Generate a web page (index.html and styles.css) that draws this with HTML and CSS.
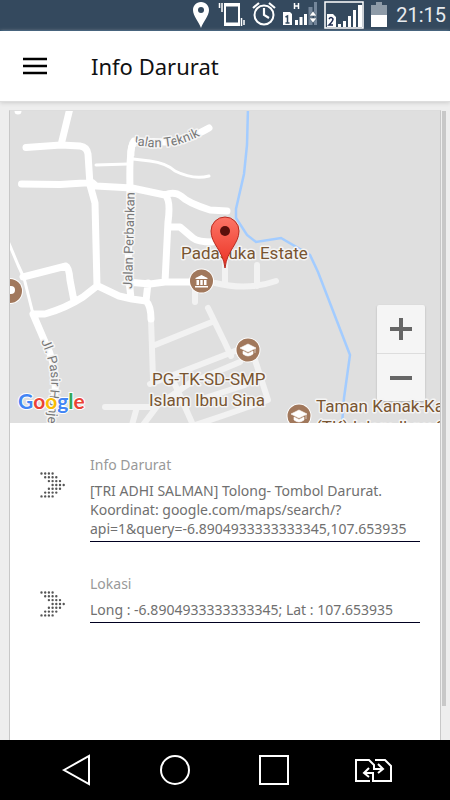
FILE: index.html
```html
<!DOCTYPE html>
<html lang="id">
<head>
<meta charset="utf-8">
<meta name="viewport" content="width=device-width, initial-scale=1">
<title>Info Darurat</title>
<link rel="stylesheet" href="styles.css">
</head>
<body>
<div class="status">
  <svg width="16" height="26" viewBox="194 4 16 26"><path d="M202 4c-5 0-8 4-8 8 0 6 6 12 8 18 2-6 8-12 8-18 0-4-3-8-8-8z" fill="#fff"/><circle cx="202" cy="12" r="3" fill="#34495e"/></svg>
  <svg width="29" height="26" viewBox="218 4 29 26" fill="none" stroke="#fff"><path d="M227 6h14v21h-14z" stroke-width="2"/><path d="M227 7.500h13M227 25.500h13" stroke-width="2"/><path d="M224 5v9M221.500 5v5M243.500 20v8M246 22v5" stroke-width="1.500"/></svg>
  <svg width="24" height="26" viewBox="253 4 24 26" fill="none" stroke="#fff" stroke-width="2"><circle cx="265" cy="17" r="9.500"/><path d="M265 10v7l5 3M254 10l6-5M276 10l-6-5" stroke-width="2.200"/></svg>
  <svg width="34" height="26" viewBox="286 4 34 26"><path d="M286 14h7l2 2v11h-9zM298 22h3v5h-3zM302.500 19h3v8h-3zM307 16h3v11h-3z" fill="#fff"/><path d="M311.500 9h4v18h-4zM317 4h3v23h-3z" fill="#74869a"/><path d="M297.500 5v6M301.500 5v6M297.500 8h4" stroke="#fff" stroke-width="1.500"/><path d="M312 18l4-5 4 5zM312 20h8l-4 5z" fill="#fff" stroke="#34495e" stroke-width=".6"/><path d="M288.500 19l2-1v7m-2 0h4" fill="none" stroke="#34495e" stroke-width="1.500"/></svg>
  <svg width="40" height="28" viewBox="324 1 40 28"><path d="M325 2h38v26h-38z" fill="#34495e" stroke="#fff" stroke-width="1.500"/><path d="M327 14h6l3 3v10h-9zM338 24h3v3h-3zM343 21h3v6h-3zM348 16h3v11h-3zM353 10h3v17h-3zM358 5h4v22h-4z" fill="#fff"/><path d="M329 19q2-3 4 0-0 2-4 6h4" fill="none" stroke="#1f2c52" stroke-width="1.500"/></svg>
  <svg width="16" height="26" viewBox="371 3 16 26"><path d="M376 3h6v3h5v11h-16V6h5z" fill="#8e9ba8"/><path d="M371 16h16v12h-16z" fill="#fff"/></svg>
  <span class="time">21:15</span>
</div>
<header class="bar">
  <button class="menu" aria-label="Menu"><svg width="24" height="18" viewBox="0 0 24 18"><path d="M0 2h24M0 9h24M0 16h24" stroke="#000" stroke-width="2.500"/></svg></button>
  <h1>Info Darurat</h1>
</header>
<main class="content">
  <section class="card">
    <div class="map">
      <svg class="tiles" viewBox="10 111 430 312" preserveAspectRatio="xMidYMid slice" role="img" aria-label="Peta Padasuka Estate">
        <defs>
          <linearGradient id="red" x1="0" y1="0" x2="0" y2="1"><stop offset="0" stop-color="#fd7567"/><stop offset="1" stop-color="#ea3122"/></linearGradient>
          <path id="teknik" d="M130 145Q138 146 144 146Q175 152 210 130"/>
          <path id="perbankan" d="M132 289L135 185"/>
          <path id="pasir" d="M41 341Q52 366 51 384L46 440"/>
          <g id="school"><circle r="12.500" fill="#fff"/><circle r="11.500" fill="#a1785c"/><path d="M-8-2L0-6 8-2 0 2zM-5 1v3Q0 8 5 4V1L0 3.500zM7-2v5" fill="#fff" stroke="#fff" stroke-width=".6"/></g>
        </defs>
        <path d="M0 100h460v340H0z" fill="#dfdfdf"/>
        <g class="lane">
          <path d="M151 319L152 349 153 380M155 345L212 322M208 308L225 343 231 356M150 384L225 355 240 349M173 380L193 425M105 407H150M137 407L132 425M143 425L158 405 190 383 240 362M255 360L268 400 225 415 195 425M215 283Q248 291 276 281M257 265V286M225 255V285M195 287V302M205 398L245 385"/>
        </g>
        <g class="road">
          <path d="M26 147.500L61 145 80 146Q87 147 88 154L90 185 95 203 97 286 83 297Q66 308 45 314H33M71 104L61 145M21.500 184L60 184.500 92 182.500 96 186 132 188 165 195Q174 191 181 196 188 203 210 210L227 211M98 286L119 296 132 299 146 301Q151 306 151 319M209 128Q185 142 165 142L134 141Q129 147 130 188L128 272 131 298M165 195Q171 200 168 222L165 282M168 227H180L193 238Q198 242 212 242M127 282L150 284 165 282H192M148 283L146 301M23 277L66 266Q69 267 70 280L74 301M33 314L45 342Q57 365 55 392L50 425M18 109V111"/>
        </g>
        <path class="path" d="M96 165L128 164M133 159L150 161Q166 163 175 171 193 180 209 176M8 241L18 265 24 278 33 314M63 265V268"/>
        <path d="M248 108L247 145 244 174 236 209V218L247 235 256 242 281 238 310 255 318 272 350 355 344 398 342 425" fill="none" stroke="#a3ccff" stroke-width="2.500"/>
        <g class="street">
          <text><textPath href="#teknik">Jalan Teknik</textPath></text>
          <text><textPath href="#perbankan">Jalan Perbankan</textPath></text>
          <text><textPath href="#pasir">Jl. Pasir Honje</textPath></text>
        </g>
        <path d="M131 156Q130 146 135 141" fill="none" stroke="#fff" stroke-width="7"/>
        <circle cx="10" cy="291" r="13" fill="#fff"/><circle cx="10" cy="291" r="12" fill="#a1785c"/><circle cx="11" cy="290" r="4" fill="#fff"/>
        <g transform="translate(201.500 281)"><circle r="12.500" fill="#fff"/><circle r="11.500" fill="#a1785c"/><path d="M-6-3L0-6 6-3v1H-6zM-5-1h2.500v5H-5zM-1.200-1h2.400v5h-2.400zM2.500-1H5v5H2.500zM-6.500 5h13v1.500h-13z" fill="#fff"/></g>
        <use href="#school" x="248" y="350"/>
        <use href="#school" x="299" y="416"/>
        <g class="place">
          <text x="181" y="259">Padasuka Estate</text>
          <text x="152" y="385">PG-TK-SD-SMP</text>
          <text x="149" y="406">Islam Ibnu Sina</text>
        </g>
        <path d="M225 268C223 250 211 244 211 231a14 14 0 0 1 28 0C239 244 227 250 225 268z" fill="url(#red)" stroke="#b92b20"/>
        <circle cx="225" cy="231" r="5" fill="#5c100c"/>
        <text class="logo" x="18" y="409"><tspan fill="#4285f4">G</tspan><tspan fill="#ea4335">o</tspan><tspan fill="#fbbc05">o</tspan><tspan fill="#4285f4">g</tspan><tspan fill="#34a853">l</tspan><tspan fill="#ea4335">e</tspan></text>
      </svg>
      <div class="zoom">
        <button aria-label="Perbesar"><svg width="22" height="22" viewBox="0 0 22 22"><path d="M0 11h22M11 0v22" stroke="#666" stroke-width="4"/></svg></button>
        <button aria-label="Perkecil"><svg width="22" height="22" viewBox="0 0 22 22"><path d="M0 11h22" stroke="#666" stroke-width="4"/></svg></button>
      </div>
      <svg class="tiles over" viewBox="10 111 430 312" preserveAspectRatio="xMidYMid slice">
        <g class="place"><text x="316" y="412">Taman Kanak-Kanak</text><text x="316" y="433">(TK) Islam Ibnu Sina</text></g>
      </svg>
    </div>
    <form class="fields">
      <div class="field">
        <svg class="chevron" viewBox="0 0 26 26"><path d="M1.500 1.500h11.200M5.200 5.300h11.200M8.900 9.100h11.200M12.600 13h11.200M8.900 16.800h11.200M5.200 20.600h11.200M1.500 24.400h11.200"/></svg>
        <div class="entry">
          <label for="info">Info Darurat</label>
          <textarea id="info" rows="3" readonly>[TRI ADHI SALMAN] Tolong- Tombol Darurat.
Koordinat: google.com/maps/search/?
api=1&amp;query=-6.8904933333333345,107.653935</textarea>
        </div>
      </div>
      <div class="field">
        <svg class="chevron" viewBox="0 0 26 26"><path d="M1.500 1.500h11.200M5.200 5.300h11.200M8.900 9.100h11.200M12.600 13h11.200M8.900 16.800h11.200M5.200 20.600h11.200M1.500 24.400h11.200"/></svg>
        <div class="entry">
          <label for="lokasi">Lokasi</label>
          <input id="lokasi" type="text" readonly value="Long : -6.8904933333333345; Lat : 107.653935">
        </div>
      </div>
    </form>
  </section>
  <div class="scroll"></div>
</main>
<nav class="nav">
  <button aria-label="Kembali"><svg width="40" height="32" viewBox="0 0 40 32"><path d="M8 16L33 2v28z"/></svg></button>
  <button aria-label="Beranda"><svg width="40" height="32" viewBox="0 0 40 32"><circle cx="20" cy="16" r="14"/></svg></button>
  <button aria-label="Aplikasi terbaru"><svg width="40" height="32" viewBox="0 0 40 32"><path d="M5 2h28v28H5z"/></svg></button>
  <button aria-label="Ganti SIM"><svg width="40" height="32" viewBox="0 0 40 32"><path d="M16 27H2V6h13l5 5v4h8M24 10l5 5-5 4M21 6h10l6 6v15H19v-8h-8M15 14l-5 5 5 4"/></svg></button>
</nav>
</body>
</html>
```

FILE: styles.css
```css
* {
  box-sizing: border-box;
}

body {
  margin: 0;
  height: 100vh;
  display: flex;
  flex-direction: column;
  background: #eee;
  font-family: "Noto Sans", sans-serif;
}

button {
  padding: 0;
  border: 0;
  background: none;
  display: flex;
  align-items: center;
  justify-content: center;
}

.status {
  height: 31px;
  padding-right: 4px;
  display: flex;
  align-items: center;
  justify-content: flex-end;
  gap: 7px;
  background: #34495e;
  border-bottom: 1px solid #1d4464;
}

.status svg {
  flex: none;
}

.time {
  margin-left: 2px;
  color: #e8ebee;
  font: 20px/30px Roboto, sans-serif;
}

.bar {
  height: 71px;
  padding: 0 23px;
  display: flex;
  align-items: center;
  gap: 44px;
  background: #fff;
  border-bottom: 1px solid #ddd;
  box-shadow: 0 1px 4px #ccc;
}

.bar h1 {
  margin: 0;
  font-size: 22px;
  line-height: 32px;
  font-weight: 400;
  color: #111;
}

.content {
  position: relative;
  flex: 1;
  min-height: 0;
  padding: 8px 9px 0;
}

.card {
  height: 100%;
  background: #fff;
  border: 1px solid #c8c8c8;
  border-top-color: #ddd;
  border-bottom: 0;
}

.scroll {
  position: absolute;
  top: 9px;
  right: 4px;
  bottom: 34px;
  width: 4px;
  background: #c8c8c8;
}

.map {
  position: relative;
  height: 312px;
  overflow: hidden;
}

.tiles {
  display: block;
  width: 100%;
  height: 100%;
}

.over {
  position: absolute;
  inset: 0;
  pointer-events: none;
}

.lane, .road, .path {
  fill: none;
  stroke: #fff;
  stroke-width: 7;
  stroke-linecap: round;
  stroke-linejoin: round;
}

.lane {
  stroke: #f2f2f2;
  stroke-width: 6;
}

.path {
  stroke-width: 3;
}

.street, .place {
  font-family: Roboto, sans-serif;
  font-size: 13px;
  fill: #777;
  stroke: #f4f4f4;
  stroke-width: 3;
  stroke-linejoin: round;
  paint-order: stroke;
}

.place {
  font-size: 17px;
  fill: #795531;
}

.logo {
  font: 700 21px Lato, sans-serif;
  stroke: #fff;
  stroke-width: 2;
  paint-order: stroke;
}

.zoom {
  position: absolute;
  right: 15px;
  bottom: 22px;
  width: 48px;
  background: #f5f5f5;
  border-radius: 2px;
  box-shadow: 0 1px 2px #aaa;
}

.zoom button {
  width: 48px;
  height: 48px;
}

.zoom button + button {
  border-top: 1px solid #ddd;
}

.fields {
  padding: 32px 20px 0 30px;
  display: flex;
  flex-direction: column;
  gap: 32px;
}

.field {
  display: flex;
  gap: 24px;
}

.chevron {
  flex: none;
  width: 26px;
  height: 26px;
  margin-top: 17px;
  fill: none;
  stroke: #555;
  stroke-width: 2.4;
  stroke-linecap: round;
  stroke-dasharray: 0 3.7;
}

.entry {
  flex: 1;
  display: flex;
  flex-direction: column;
  gap: 6px;
}

.entry label {
  font-size: 14px;
  line-height: 20px;
  color: #999;
}

.entry textarea,
.entry input {
  display: block;
  width: 100%;
  margin: 0;
  padding: 0 0 3px;
  border: 0;
  border-bottom: 1px solid #000020;
  border-radius: 0;
  outline: 0;
  background: none;
  color: #707070;
  font: 14px/19px "Noto Sans", sans-serif;
  resize: none;
  overflow: hidden;
}

.nav {
  height: 60px;
  padding: 0 26px;
  display: flex;
  align-items: center;
  justify-content: space-around;
  background: #000;
}

.nav svg {
  fill: none;
  stroke: #fff;
  stroke-width: 2;
}
```
